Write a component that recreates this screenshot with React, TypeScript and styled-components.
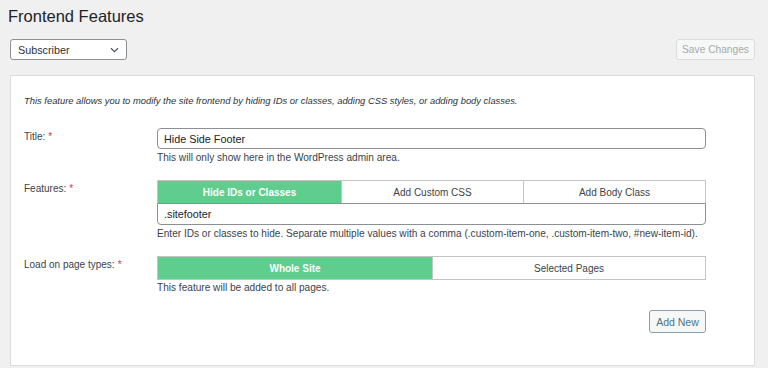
import React from 'react'
import styled, { createGlobalStyle } from 'styled-components'

const GlobalStyle = createGlobalStyle`
	html, body {
		margin: 0;
		padding: 0;
		background: #f0f0f1;
		font-family: 'Liberation Sans', Arial, sans-serif;
		color: #3c434a;
	}
`

const Page = styled.div`
	padding: 0 13px 0 10px;
	height: 368px;
	overflow: hidden;
`

const Heading = styled.h1`
	margin: 0 0 0 -2px;
	padding: 6px 0 0;
	font-size: 16.5px;
	line-height: 20px;
	font-weight: 400;
	color: #1d2327;
`

const Toolbar = styled.div`
	display: flex;
	justify-content: space-between;
	align-items: center;
	margin-top: 13px;
`

const SelectBox = styled.div`
	box-sizing: border-box;
	width: 117px;
	height: 21px;
	display: flex;
	align-items: center;
	justify-content: space-between;
	padding: 0 7px;
	background: #fff;
	border: 1px solid #8c8f94;
	border-radius: 3px;
	font-size: 10.8px;
	color: #2c3338;
`

const SaveButton = styled.button`
	box-sizing: border-box;
	width: 79px;
	height: 21px;
	padding: 0;
	background: #f6f7f7;
	border: 1px solid #dcdcde;
	border-radius: 3px;
	font-family: inherit;
	font-size: 10.2px;
	color: #a7aaad;
`

const Panel = styled.div`
	margin-top: 15px;
	background: #fff;
	border: 1px solid #dcdcde;
	padding: 18px 48px 32px 13px;
`

const Intro = styled.p`
	margin: 0;
	font-size: 9.4px;
	line-height: 14px;
	font-style: italic;
	color: #2c3338;
`

const Row = styled.div<{ $gap: number }>`
	display: grid;
	grid-template-columns: 133px 549px;
	margin-top: ${(p) => p.$gap}px;
`

const Label = styled.div`
	padding-top: 2px;
	font-size: 10px;
	line-height: 14px;
	color: #3c434a;
`

const Star = styled.span`
	color: #d63638;
	margin-left: 3px;
`

const Field = styled.div`
	display: flex;
	flex-direction: column;
`

const TextInput = styled.div<{ $h: number; $flatTop?: boolean }>`
	box-sizing: border-box;
	height: ${(p) => p.$h}px;
	display: flex;
	align-items: center;
	padding: 0 6px;
	border: 1px solid #8c8f94;
	border-radius: ${(p) => (p.$flatTop ? '0 0 4px 4px' : '4px')};
	font-size: 10.8px;
	color: #1d2327;
`

const Help = styled.div<{ $top: number }>`
	margin-top: ${(p) => p.$top}px;
	font-size: 10.1px;
	line-height: 14px;
	color: #3c434a;
`

const Tabs = styled.div<{ $cols: string; $h: number; $closed?: boolean }>`
	box-sizing: border-box;
	display: grid;
	grid-template-columns: ${(p) => p.$cols};
	height: ${(p) => p.$h}px;
	border: 1px solid #c3c4c7;
	border-bottom: ${(p) => (p.$closed ? '1px solid #c3c4c7' : 'none')};
`

const Tab = styled.div<{ $active?: boolean }>`
	display: flex;
	align-items: center;
	justify-content: center;
	font-size: 10px;
	background: ${(p) => (p.$active ? '#5ecd8d' : '#fff')};
	color: ${(p) => (p.$active ? '#fff' : '#3c434a')};
	font-weight: ${(p) => (p.$active ? 700 : 400)};
	& + & {
		border-left: 1px solid #c3c4c7;
	}
`

const Actions = styled.div`
	display: flex;
	justify-content: flex-end;
	width: 682px;
	margin-top: 15px;
`

const AddButton = styled.button`
	box-sizing: border-box;
	width: 57px;
	height: 23px;
	padding: 0;
	background: #f6f7f7;
	border: 1px solid #8d9da6;
	border-radius: 3px;
	font-family: inherit;
	font-size: 10.5px;
	color: #4b7684;
`

const Chevron = () => (
	<svg width="9" height="6" viewBox="0 0 9 6">
		<path d="M1 1.2 L4.5 4.6 L8 1.2" fill="none" stroke="#50575e" strokeWidth="1.3" />
	</svg>
)

export default function App() {
	return (
		<>
			<GlobalStyle />
			<Page>
				<Heading>Frontend Features</Heading>
				<Toolbar>
					<SelectBox>
						<span>Subscriber</span>
						<Chevron />
					</SelectBox>
					<SaveButton disabled>Save Changes</SaveButton>
				</Toolbar>
				<Panel>
					<Intro>
						This feature allows you to modify the site frontend by hiding IDs or classes, adding CSS
						styles, or adding body classes.
					</Intro>
					<Row $gap={20}>
						<Label>
							Title:<Star>*</Star>
						</Label>
						<Field>
							<TextInput $h={21}>Hide Side Footer</TextInput>
							<Help $top={2}>This will only show here in the WordPress admin area.</Help>
						</Field>
					</Row>
					<Row $gap={15}>
						<Label>
							Features:<Star>*</Star>
						</Label>
						<Field>
							<Tabs $cols="183px 182px 1fr" $h={23}>
								<Tab $active>Hide IDs or Classes</Tab>
								<Tab>Add Custom CSS</Tab>
								<Tab>Add Body Class</Tab>
							</Tabs>
							<TextInput $h={22} $flatTop>
								.sitefooter
							</TextInput>
							<Help $top={2}>
								Enter IDs or classes to hide. Separate multiple values with a comma (.custom-item-one,
								.custom-item-two, #new-item-id).
							</Help>
						</Field>
					</Row>
					<Row $gap={15}>
						<Label>
							Load on page types:<Star>*</Star>
						</Label>
						<Field>
							<Tabs $cols="274px 1fr" $h={24} $closed>
								<Tab $active>Whole Site</Tab>
								<Tab>Selected Pages</Tab>
							</Tabs>
							<Help $top={1}>This feature will be added to all pages.</Help>
						</Field>
					</Row>
					<Actions>
						<AddButton>Add New</AddButton>
					</Actions>
				</Panel>
			</Page>
		</>
	)
}
